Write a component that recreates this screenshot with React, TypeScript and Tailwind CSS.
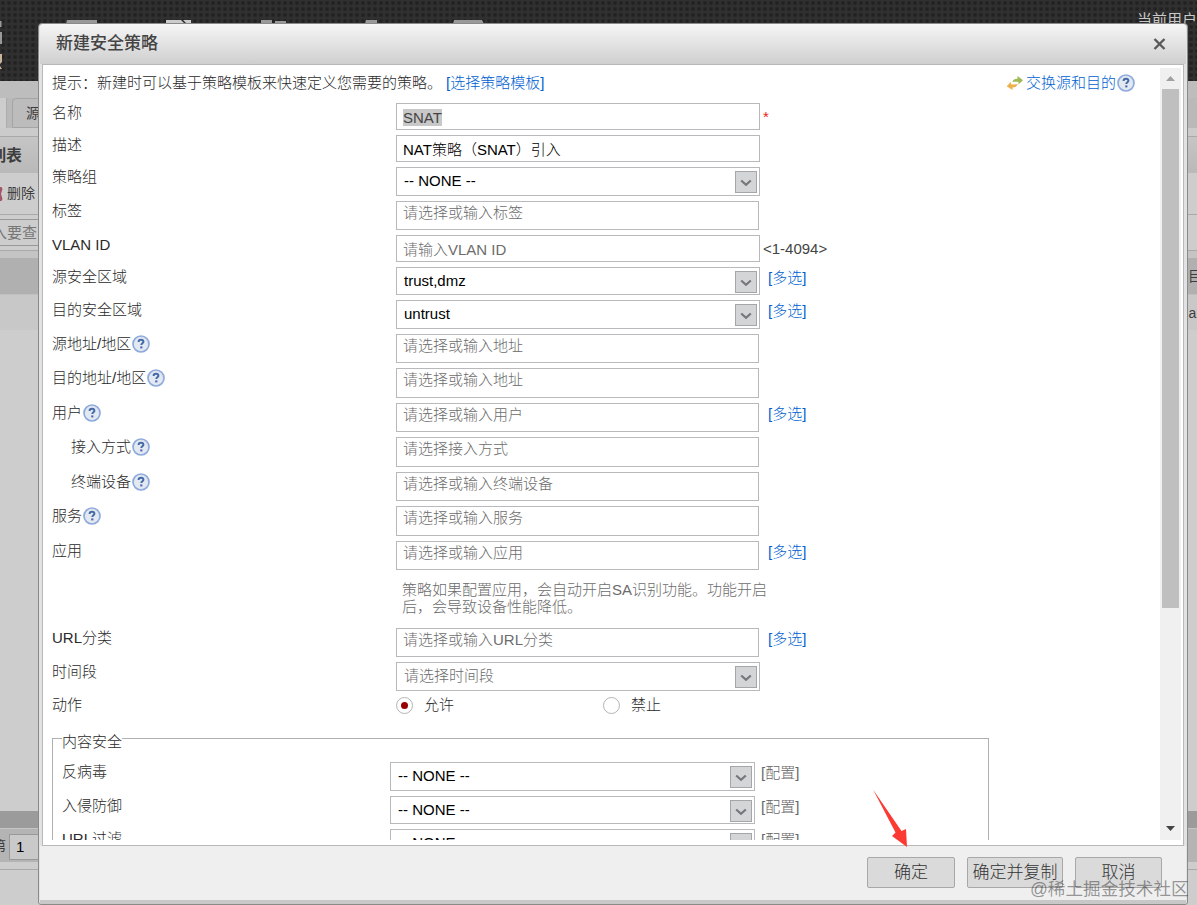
import React from "react";

type Kind = "input" | "select" | "tag";

interface FormRow {
  label: string;
  kind: Kind;
  value?: string;
  placeholder?: string;
  help?: boolean;
  indent?: boolean;
  selected?: boolean;
  suffix?: string;
  rowClass: string; // full row height including the gap below
  boxClass: string;
}

const rows: FormRow[] = [
  { label: "名称", kind: "input", value: "SNAT", selected: true, suffix: "*", rowClass: "h-8", boxClass: "h-[27px]" },
  { label: "描述", kind: "input", value: "NAT策略（SNAT）引入", rowClass: "h-8", boxClass: "h-[27px]" },
  { label: "策略组", kind: "select", value: "-- NONE --", rowClass: "h-[34px]", boxClass: "h-[29px]" },
  { label: "标签", kind: "tag", placeholder: "请选择或输入标签", rowClass: "h-[34px]", boxClass: "h-[29px]" },
  { label: "VLAN ID", kind: "input", placeholder: "请输入VLAN ID", suffix: "<1-4094>", rowClass: "h-8", boxClass: "h-[27px]" },
  { label: "源安全区域", kind: "select", value: "trust,dmz", suffix: "[多选]", rowClass: "h-[33px]", boxClass: "h-[28px]" },
  { label: "目的安全区域", kind: "select", value: "untrust", suffix: "[多选]", rowClass: "h-[34px]", boxClass: "h-[29px]" },
  { label: "源地址/地区", kind: "tag", placeholder: "请选择或输入地址", help: true, rowClass: "h-[34px]", boxClass: "h-[29px]" },
  { label: "目的地址/地区", kind: "tag", placeholder: "请选择或输入地址", help: true, rowClass: "h-[35px]", boxClass: "h-[30px]" },
  { label: "用户", kind: "tag", placeholder: "请选择或输入用户", help: true, suffix: "[多选]", rowClass: "h-[34px]", boxClass: "h-[29px]" },
  { label: "接入方式", kind: "tag", placeholder: "请选择接入方式", help: true, indent: true, rowClass: "h-[35px]", boxClass: "h-[30px]" },
  { label: "终端设备", kind: "tag", placeholder: "请选择或输入终端设备", help: true, indent: true, rowClass: "h-[34px]", boxClass: "h-[29px]" },
  { label: "服务", kind: "tag", placeholder: "请选择或输入服务", help: true, rowClass: "h-[35px]", boxClass: "h-[30px]" },
  { label: "应用", kind: "tag", placeholder: "请选择或输入应用", suffix: "[多选]", rowClass: "h-[40px]", boxClass: "h-[29px]" },
];

const rowsAfterHint: FormRow[] = [
  { label: "URL分类", kind: "tag", placeholder: "请选择或输入URL分类", suffix: "[多选]", rowClass: "h-[34px]", boxClass: "h-[29px]" },
  { label: "时间段", kind: "select", placeholder: "请选择时间段", rowClass: "h-[33px]", boxClass: "h-[29px]" },
];

const securityRows = [
  { label: "反病毒", rowClass: "h-[34px]", boxClass: "h-[29px]" },
  { label: "入侵防御", rowClass: "h-[33px]", boxClass: "h-[28px]" },
  { label: "URL过滤", rowClass: "h-[34px]", boxClass: "h-[29px]" },
];

const HelpIcon: React.FC = () => (
  <svg width="18" height="18" viewBox="0 0 18 18" className="ml-px shrink-0">
    <circle cx="9" cy="9" r="8" fill="#e3e9f0" stroke="#8ea9dc" strokeWidth="1.7" />
    <path d="M9 2.200a6.800 6.800 0 0 1 6.800 6.800" fill="none" stroke="#cfdaf0" strokeWidth="0.8" />
    <path d="M6.600 7.100c0-1.500 1-2.300 2.400-2.300s2.400.8 2.400 2c0 1.500-2.100 1.500-2.100 3.100" fill="none" stroke="#456aa8" strokeWidth="2" />
    <rect x="8.200" y="11.400" width="2.200" height="2" fill="#5562bd" />
  </svg>
);

const SwapIcon: React.FC = () => (
  <svg width="18" height="16" viewBox="0 0 18 16" className="shrink-0">
    <path d="M6.500 7C7 4.500 8.500 3.800 11.500 3.800V1l5.500 4.200-4.500 4.300V7C10.500 6.500 9 6.500 6.500 7z" fill="#9dbb52" />
    <path d="M11.500 9C11 11.500 9.500 12.400 6.500 12.500V15L.7 11.200 5 6.700V9.200c2.500.3 4 .3 6.500-.2z" fill="#eeb04a" />
  </svg>
);

const DropButton: React.FC = () => (
  <span className="flex h-[22px] w-[22px] shrink-0 items-center justify-center border border-[#a3a7aa] bg-[#d3d5d7]">
    <svg width="12" height="8" viewBox="0 0 12 8" className="mt-px">
      <path d="M1.200 1.500 6 5.800l4.800-4.300" fill="none" stroke="#75787b" strokeWidth="2.200" />
    </svg>
  </span>
);

const Field: React.FC<{ row: FormRow }> = ({ row }) => {
  const color = row.value ? "text-black" : "text-[#6c6c6c]";
  if (row.kind === "select") {
    return (
      <div className={`flex w-[364px] shrink-0 justify-between border border-[#b9b9bb] bg-white pl-[7px] pr-0.5 pt-[3px] ${row.boxClass} ${color}`}>
        <span className="leading-5">{row.value || row.placeholder}</span>
        <DropButton />
      </div>
    );
  }
  if (row.kind === "tag") {
    return (
      <div className={`mr-px w-[363px] shrink-0 border border-[#b9b9bb] bg-white pl-1.5 leading-[22px] ${row.boxClass} ${color}`}>
        {row.placeholder}
      </div>
    );
  }
  return (
    <div className={`flex w-[364px] shrink-0 items-center border border-[#b9b9bb] bg-white pl-1.5 pt-px ${row.boxClass} ${color}`}>
      <span className={row.selected ? "bg-[#c8c8c8] leading-[17px] text-[#444]" : "leading-[17px]"}>
        {row.value || row.placeholder}
      </span>
    </div>
  );
};

const Suffix: React.FC<{ text: string }> = ({ text }) => {
  if (text === "*") {
    return <span className="ml-[3px] mt-1 leading-5 text-[#f02020]">*</span>;
  }
  if (text.startsWith("<")) {
    return <span className="ml-[3px] mt-1 leading-5 text-[#444]">{text}</span>;
  }
  return <a className="ml-2 leading-[22px] text-[#005fd0]">{text}</a>;
};

const Row: React.FC<{ row: FormRow }> = ({ row }) => (
  <div className={`flex items-start ${row.rowClass}`}>
    <div className={`flex h-5 w-[344px] shrink-0 items-center leading-5 ${row.indent ? "pl-[19px]" : ""}`}>
      {row.label}
      {row.help && <HelpIcon />}
    </div>
    <Field row={row} />
    {row.suffix && <Suffix text={row.suffix} />}
  </div>
);

const Radio: React.FC<{ label: string; checked?: boolean }> = ({ label, checked }) => (
  <label className="flex w-[207px] items-center">
    <span className="mr-[11px] flex h-[17px] w-[17px] items-center justify-center rounded-full border border-[#b4b4b4] bg-white">
      {checked && <span className="h-[7px] w-[7px] rounded-full bg-[#990000]" />}
    </span>
    {label}
  </label>
);

// Dimmed list page that stays visible around the dialog
const Backdrop: React.FC = () => (
  <div className="flex h-[905px] flex-col bg-[#cdcdcd] text-[14px] text-[#3d3d3d]">
    <div className="flex h-[81px] shrink-0 items-start justify-between bg-[#303030] bg-[radial-gradient(#222_30%,transparent_60%)] bg-[size:6px_6px]">
      <svg width="500" height="81" viewBox="0 0 500 81">
        <path d="M0 21h1.500v6H0zM0 32h2v12H0zM67 20h30v4H66zM261 20h11v4h-11zM275 21h11v3h-11zM366 20h11v4h-12zM454 20h28l2 4h-31z" fill="#999" />
        <path d="M166 20h15l4 4h-19zM183 20h8v4h-4z" fill="#ccc" />
        <path d="M0 54h2v4l-2 2zM0 59l2-1v4l-2 2zM0 66l2 3H0z" fill="#c9b39b" />
      </svg>
      <span className="w-[60px] pt-2.5 text-[15px] leading-5 text-[#c9c9c9]">当前用户</span>
    </div>
    <div className="h-[17px] shrink-0 bg-[#bdbdbd]" />
    <div className="flex h-[30px] shrink-0 bg-[#b9b9b9]">
      <div className="w-[7px] border-r border-[#adadad] bg-[#cdcdcd]" />
      <div className="ml-[5px] w-[80px] rounded-tl border border-[#a5a5a5] bg-[#bcbcbc] pl-[13px] leading-7">源</div>
    </div>
    <div className="h-[9px] shrink-0 border-b border-[#a9a9a9] bg-[#cbcbcb]" />
    <div className="h-[36px] shrink-0 bg-linear-to-b from-[#c5c5c5] to-[#b9b9b9]">
      <div className="-ml-[10px] pt-[9px] text-[16px] font-bold leading-5">列表</div>
    </div>
    <div className="flex h-[42px] shrink-0 items-center border-b border-[#a9a9a9]">
      <svg width="7" height="14" viewBox="0 0 7 14">
        <path d="M0 0h1.500l1 2-1.500 5 1.500 5-1 2H0z" fill="#a35566" />
      </svg>
      删除
    </div>
    <div className="flex h-[36px] shrink-0 border-b border-[#a9a9a9] pt-1">
      <div className="-ml-[9px] h-[27px] w-[160px] border border-[#989898] text-[15px] leading-[26px] text-[#777]">入要查</div>
    </div>
    <div className="h-[7px] shrink-0 bg-[#c4c4c4]" />
    <div className="flex h-[37px] shrink-0 items-center justify-end border-b border-[#c0c0c0] bg-[#b0b0b0]">
      <span className="-mr-[5px]">目</span>
    </div>
    <div className="flex h-[35px] shrink-0 items-center justify-end bg-[#c8c8c8]">
      <span className="-mr-[4px] pt-px text-[14px]">ar</span>
    </div>
    <div className="grow" />
    <div className="h-[17px] shrink-0 bg-[#9b9b9b]" />
    <div className="flex h-[34px] shrink-0 border-t border-[#c5c5c5] bg-[#b4b4b4] pt-[5px]">
      <span className="-ml-2 w-[17px] pt-0.5 leading-5">第</span>
      <span className="h-[26px] w-10 border border-[#999] bg-[#c9c9c9] pl-1.5 text-[15px] leading-6 text-black">1</span>
    </div>
    <div className="h-2 shrink-0 border-b border-[#a9a9a9]" />
    <div className="h-[35px] shrink-0" />
  </div>
);

const App: React.FC = () => (
  <div className="relative h-[905px] w-[1197px] overflow-hidden whitespace-nowrap font-['Liberation_Sans','Noto_Sans_CJK_SC',sans-serif]">
    <Backdrop />

    <div className="absolute left-[38px] top-[23px] flex h-[882px] w-[1150px] flex-col rounded-t-[4px] rounded-b-[3px] border border-[#8a8a8a] bg-[#e2e2e2] px-px text-[15px] font-light text-[#2a2a2a]">
      <div className="flex h-[40px] shrink-0 items-center justify-between rounded-t bg-linear-to-b from-[#f6f6f6] to-[#cfcfcf] pl-4 pr-5">
        <h1 className="text-[17px] font-medium text-[#444]">新建安全策略</h1>
        <svg width="13" height="12" viewBox="0 0 13 12">
          <path d="M1.500 1l10 10M11.500 1l-10 10" stroke="#5a5a5a" strokeWidth="2.400" />
        </svg>
      </div>

      <div className="mx-[2px] flex h-[782px] shrink-0 border border-[#b8b8b8] bg-white pb-[5px] pr-0.5 pt-[3px]">
        <div className="flex grow flex-col overflow-hidden pl-[9px]">
          <div className="flex h-[35px] shrink-0 pr-[25px] pt-[5px] leading-5">
            <span>提示：新建时可以基于策略模板来快速定义您需要的策略。</span>
            <a className="ml-1 text-[#005fd0]">[选择策略模板]</a>
            <a className="ml-auto flex h-5 items-center text-[#005fd0]">
              <SwapIcon />
              <span className="ml-[2px]">交换源和目的</span>
              <HelpIcon />
            </a>
          </div>

          <div className="shrink-0">
            {rows.map((row, i) => (
              <Row key={i} row={row} />
            ))}
          </div>

          <p className="ml-[350px] h-[47px] shrink-0 leading-[17px] text-[#6c6c6c]">
            策略如果配置应用，会自动开启SA识别功能。功能开启
            <br />
            后，会导致设备性能降低。
          </p>

          <div className="shrink-0">
            {rowsAfterHint.map((row) => (
              <Row key={row.label} row={row} />
            ))}
          </div>

          <div className="flex h-[43px] shrink-0 items-start leading-5">
            <div className="w-[344px]">动作</div>
            <div className="flex">
              <Radio label="允许" checked />
              <Radio label="禁止" />
            </div>
          </div>

          <div className="flex h-[200px] w-[937px] shrink-0 flex-col border border-[#b0b0b0] pl-[9px]">
            <div className="-mt-[8px] h-[31px]">
              <span className="inline-block bg-white leading-5">内容安全</span>
            </div>
            {securityRows.map((row) => (
              <div key={row.label} className={`flex shrink-0 items-start ${row.rowClass}`}>
                <div className="w-[328px] shrink-0 leading-5">{row.label}</div>
                <div className={`flex w-[365px] shrink-0 justify-between border border-[#b9b9bb] pl-[7px] pr-0.5 pt-[3px] text-black ${row.boxClass}`}>
                  <span className="leading-5">-- NONE --</span>
                  <DropButton />
                </div>
                <span className="ml-1.5 leading-[22px] text-[#666]">[配置]</span>
              </div>
            ))}
          </div>
        </div>

        <div className="flex w-[21px] shrink-0 flex-col items-center bg-[#f0f0f0]">
          <svg width="9" height="5" viewBox="0 0 9 5" className="my-2">
            <path d="M4.500 0 9 5H0z" fill="#a0a0a0" />
          </svg>
          <div className="h-[519px] w-[17px] bg-[#bfbfbf]" />
          <svg width="9" height="5" viewBox="0 0 9 5" className="mb-[9px] mt-auto">
            <path d="M0 0h9L4.500 5z" fill="#444" />
          </svg>
        </div>
      </div>

      <div className="flex grow border-b-4 border-[#c8c8c8] bg-[#efefef] pl-[827px] pt-[11px] text-[17px] text-[#333]">
        <button className="h-[31px] w-[88px] rounded-[2px] border border-[#a8a8a8] bg-[#dadada]">确定</button>
        <button className="ml-3 h-[31px] w-[96px] rounded-[2px] border border-[#a8a8a8] bg-[#dadada]">确定并复制</button>
        <button className="ml-3 h-[31px] w-[87px] rounded-[2px] border border-[#a8a8a8] bg-[#dadada]">取消</button>
      </div>
    </div>

    <svg width="36" height="60" viewBox="0 0 36 60" className="absolute left-[872px] top-[788px]">
      <path d="M1 1.500 29.500 43l4.500-2 1 18-15-11 3.500-3.500z" fill="#fb3b33" />
    </svg>
    <span className="absolute left-[1030px] top-[877px] text-[17.6px] leading-6 text-black/40">@稀土掘金技术社区</span>
  </div>
);

export default App;
